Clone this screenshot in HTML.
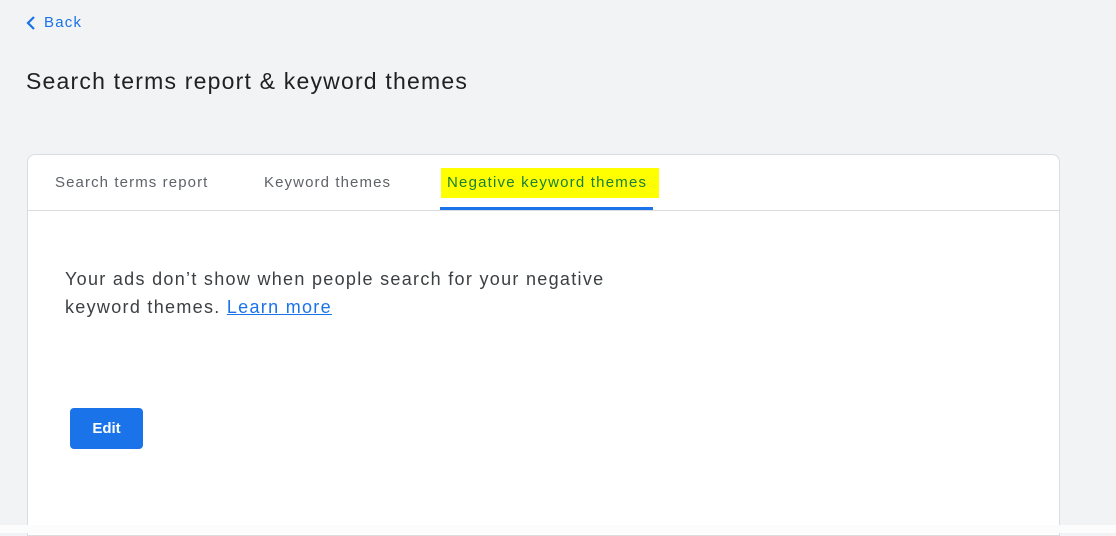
<!DOCTYPE html>
<html><head><style>
body{margin:0;width:1116px;height:533px;background:#f1f3f4;font-family:"Liberation Sans",sans-serif;position:relative;overflow:hidden}
.abs{position:absolute;white-space:nowrap}
.card{position:absolute;left:27px;top:154px;width:1031px;height:380px;background:#fff;border:1px solid #dadce0;border-radius:8px 8px 0 0}
.bottom{position:absolute;left:0;top:525px;width:1116px;height:8px;background:#fcfcfc}
.tab{font-size:15px;letter-spacing:1.1px}
</style></head><body>
<svg class="abs" style="left:25px;top:15px" width="12" height="16" viewBox="0 0 12 16"><path d="M9 2 L3 8 L9 14" fill="none" stroke="#1a73e8" stroke-width="2.2"/></svg>
<div class="abs" style="left:44px;top:14px;font-size:15px;color:#1a73e8;letter-spacing:1.2px">Back</div>
<div class="abs" style="left:26px;top:68px;font-size:23px;color:#202124;letter-spacing:1.2px">Search terms report &amp; keyword themes</div>
<div class="card">
<div style="position:absolute;left:0;top:55px;width:1031px;height:1px;background:#dadce0"></div>
<div class="abs tab" style="left:27px;top:19px;color:#5f6368">Search terms report</div>
<div class="abs tab" style="left:236px;top:19px;color:#5f6368">Keyword themes</div>
<div class="abs" style="left:413px;top:13px;width:218px;height:30px;background:#ffff00"></div>
<div class="abs tab" style="left:419px;top:19px;color:#188038;letter-spacing:1.2px">Negative keyword themes</div>
<div class="abs" style="left:412px;top:52px;width:213px;height:3px;background:#1a73e8"></div>
<div class="abs" style="left:37px;top:110px;font-size:18px;line-height:28px;color:#3c4043;letter-spacing:1.3px">Your ads don’t show when people search for your negative<br>keyword themes. <span style="color:#1a73e8;text-decoration:underline">Learn more</span></div>
<div class="abs" style="left:42px;top:253px;width:73px;height:41px;background:#1a73e8;border-radius:4px;color:#fff;font-size:15px;font-weight:bold;text-align:center;line-height:41px">Edit</div>
</div>
<div class="bottom"></div>
</body></html>
